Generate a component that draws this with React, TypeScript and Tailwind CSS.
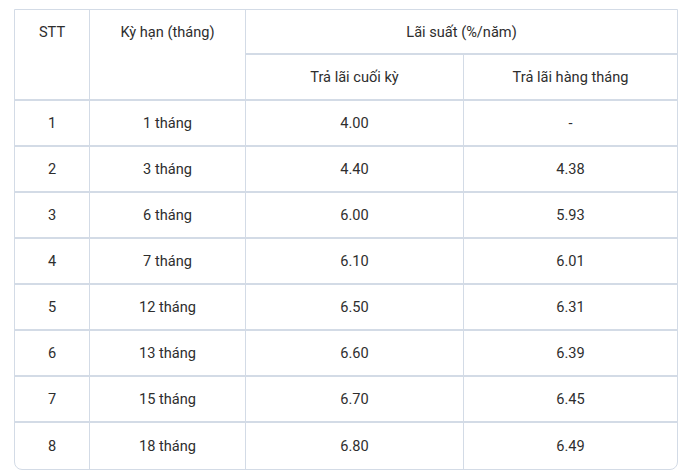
import React from "react";

const rows: [string, string, string, string][] = [
  ["1", "1 tháng", "4.00", "-"],
  ["2", "3 tháng", "4.40", "4.38"],
  ["3", "6 tháng", "6.00", "5.93"],
  ["4", "7 tháng", "6.10", "6.01"],
  ["5", "12 tháng", "6.50", "6.31"],
  ["6", "13 tháng", "6.60", "6.39"],
  ["7", "15 tháng", "6.70", "6.45"],
  ["8", "18 tháng", "6.80", "6.49"],
];

export default function App() {
  return (
    <div className="w-[683px] h-[474px] bg-white pt-[9px] pl-[14px]" style={{ fontFamily: "Roboto, 'Liberation Sans', sans-serif" }}>
      <div className="w-[664px] border border-[#d3dbe6] rounded-b-[8px] overflow-hidden">
        <table className="w-full border-separate border-spacing-0 text-[14.6px] text-[#2e2e2e] table-fixed">
          <colgroup>
            <col className="w-[75px]" />
            <col className="w-[156px]" />
            <col className="w-[218px]" />
            <col />
          </colgroup>
          <thead>
            <tr>
              <th rowSpan={2} className="font-normal align-top pt-[12px] leading-[20px] border-r border-b-2 border-[#d3dbe6]">STT</th>
              <th rowSpan={2} className="font-normal align-top pt-[12px] leading-[20px] border-r border-b-2 border-[#d3dbe6]">Kỳ hạn (tháng)</th>
              <th colSpan={2} className="font-normal h-[45px] leading-[20px] border-b-2 border-[#d3dbe6]">Lãi suất (%/năm)</th>
            </tr>
            <tr>
              <th className="font-normal h-[46px] leading-[20px] border-r border-b-2 border-[#d3dbe6]">Trả lãi cuối kỳ</th>
              <th className="font-normal h-[46px] leading-[20px] border-b-2 border-[#d3dbe6]">Trả lãi hàng tháng</th>
            </tr>
          </thead>
          <tbody>
            {rows.map((r, i) => {
              const last = i === rows.length - 1;
              const b = last ? "" : "border-b-2";
              return (
                <tr key={i}>
                  <td className={`text-center h-[46px] leading-[20px] border-r border-[#d3dbe6] ${b}`}>{r[0]}</td>
                  <td className={`text-center h-[46px] leading-[20px] border-r border-[#d3dbe6] ${b}`}>{r[1]}</td>
                  <td className={`text-center h-[46px] leading-[20px] border-r border-[#d3dbe6] ${b}`}>{r[2]}</td>
                  <td className={`text-center h-[46px] leading-[20px] border-[#d3dbe6] ${b}`}>{r[3]}</td>
                </tr>
              );
            })}
          </tbody>
        </table>
      </div>
    </div>
  );
}
